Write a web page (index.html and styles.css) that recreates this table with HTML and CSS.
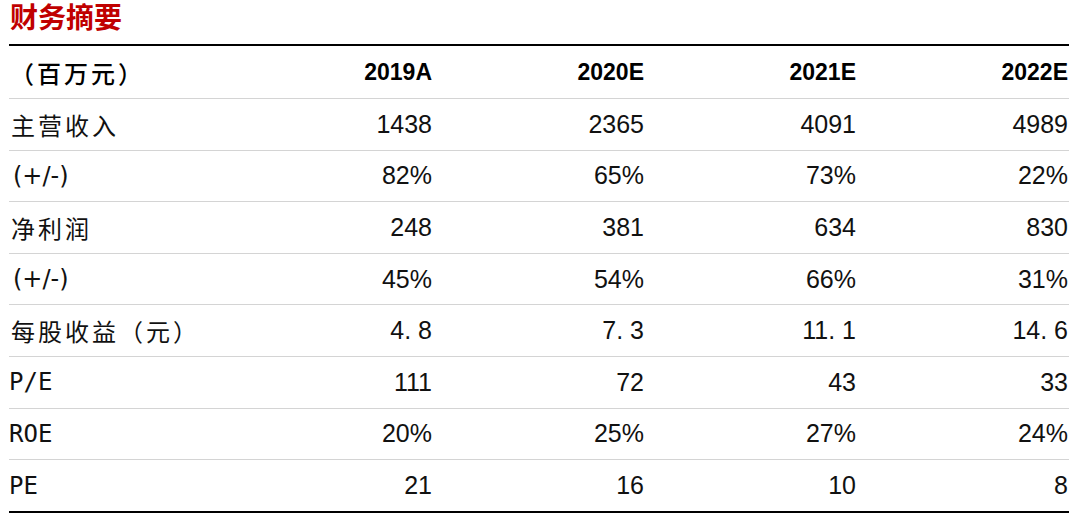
FILE: index.html
```html
<!DOCTYPE html>
<html lang="zh-CN">
<head>
<meta charset="utf-8">
<title>财务摘要</title>
<link rel="stylesheet" href="styles.css">
</head>
<body>
<h1 class="title">财务摘要</h1>
<div class="table">
  <div class="row head">
    <div class="lbl cn">（百万元）</div>
    <div class="num">2019A</div>
    <div class="num">2020E</div>
    <div class="num">2021E</div>
    <div class="num">2022E</div>
  </div>
  <div class="row">
    <div class="lbl cn">主营收入</div>
    <div class="num">1438</div>
    <div class="num">2365</div>
    <div class="num">4091</div>
    <div class="num">4989</div>
  </div>
  <div class="row">
    <div class="lbl sm">(+/-)</div>
    <div class="num">82%</div>
    <div class="num">65%</div>
    <div class="num">73%</div>
    <div class="num">22%</div>
  </div>
  <div class="row">
    <div class="lbl cn">净利润</div>
    <div class="num">248</div>
    <div class="num">381</div>
    <div class="num">634</div>
    <div class="num">830</div>
  </div>
  <div class="row">
    <div class="lbl sm">(+/-)</div>
    <div class="num">45%</div>
    <div class="num">54%</div>
    <div class="num">66%</div>
    <div class="num">31%</div>
  </div>
  <div class="row">
    <div class="lbl cn">每股收益（元）</div>
    <div class="num">4<span class="pt">.</span>8</div>
    <div class="num">7<span class="pt">.</span>3</div>
    <div class="num">11<span class="pt">.</span>1</div>
    <div class="num">14<span class="pt">.</span>6</div>
  </div>
  <div class="row">
    <div class="lbl en">P/E</div>
    <div class="num">111</div>
    <div class="num">72</div>
    <div class="num">43</div>
    <div class="num">33</div>
  </div>
  <div class="row">
    <div class="lbl en">ROE</div>
    <div class="num">20%</div>
    <div class="num">25%</div>
    <div class="num">27%</div>
    <div class="num">24%</div>
  </div>
  <div class="row">
    <div class="lbl en">PE</div>
    <div class="num">21</div>
    <div class="num">16</div>
    <div class="num">10</div>
    <div class="num">8</div>
  </div>
</div>
</body>
</html>
```

FILE: styles.css
```css
html, body {
  margin: 0;
  padding: 0;
  background: #ffffff;
}

body {
  padding: 0 11px 0 9px;
  color: #111111;
  font-family: "Liberation Sans", "Noto Sans CJK SC", sans-serif;
}

.title {
  margin: 0;
  box-sizing: border-box;
  height: 44px;
  padding: 0 0 0 1px;
  font-family: "Noto Sans CJK SC", sans-serif;
  font-size: 28px;
  line-height: 32px;
  font-weight: 700;
  color: #c00000;
}

.table {
  width: 1060px;
  display: flex;
  flex-direction: column;
  border-top: 2px solid #000000;
  border-bottom: 2px solid #000000;
}

.row {
  display: grid;
  grid-template-columns: repeat(5, 1fr);
  align-items: center;
  box-sizing: border-box;
  height: 51.6px;
  border-bottom: 1px solid #d4d4d4;
}

.row:last-child {
  border-bottom: none;
  height: 51px;
}

.row.head {
  height: 53px;
}

.num {
  text-align: right;
  padding-right: 1px;
  font-size: 25px;
  font-family: "Liberation Sans", sans-serif;
  color: #111111;
}

.head .num {
  font-size: 23px;
  font-weight: 700;
  color: #000000;
}

.pt {
  display: inline-block;
  width: 0.556em;
  text-align: left;
}

.lbl {
  white-space: nowrap;
  color: #111111;
}

.lbl.cn {
  padding-left: 2px;
  font-family: "Noto Sans CJK SC", sans-serif;
  font-size: 24px;
  letter-spacing: 3px;
}

.head .lbl.cn {
  padding-left: 1px;
  font-weight: 500;
  color: #000000;
}

.lbl.en {
  font-family: "DejaVu Sans Mono", monospace;
  font-size: 24px;
}

.lbl.sm {
  padding-left: 4px;
  font-family: "DejaVu Sans", sans-serif;
  font-size: 24px;
}
```
